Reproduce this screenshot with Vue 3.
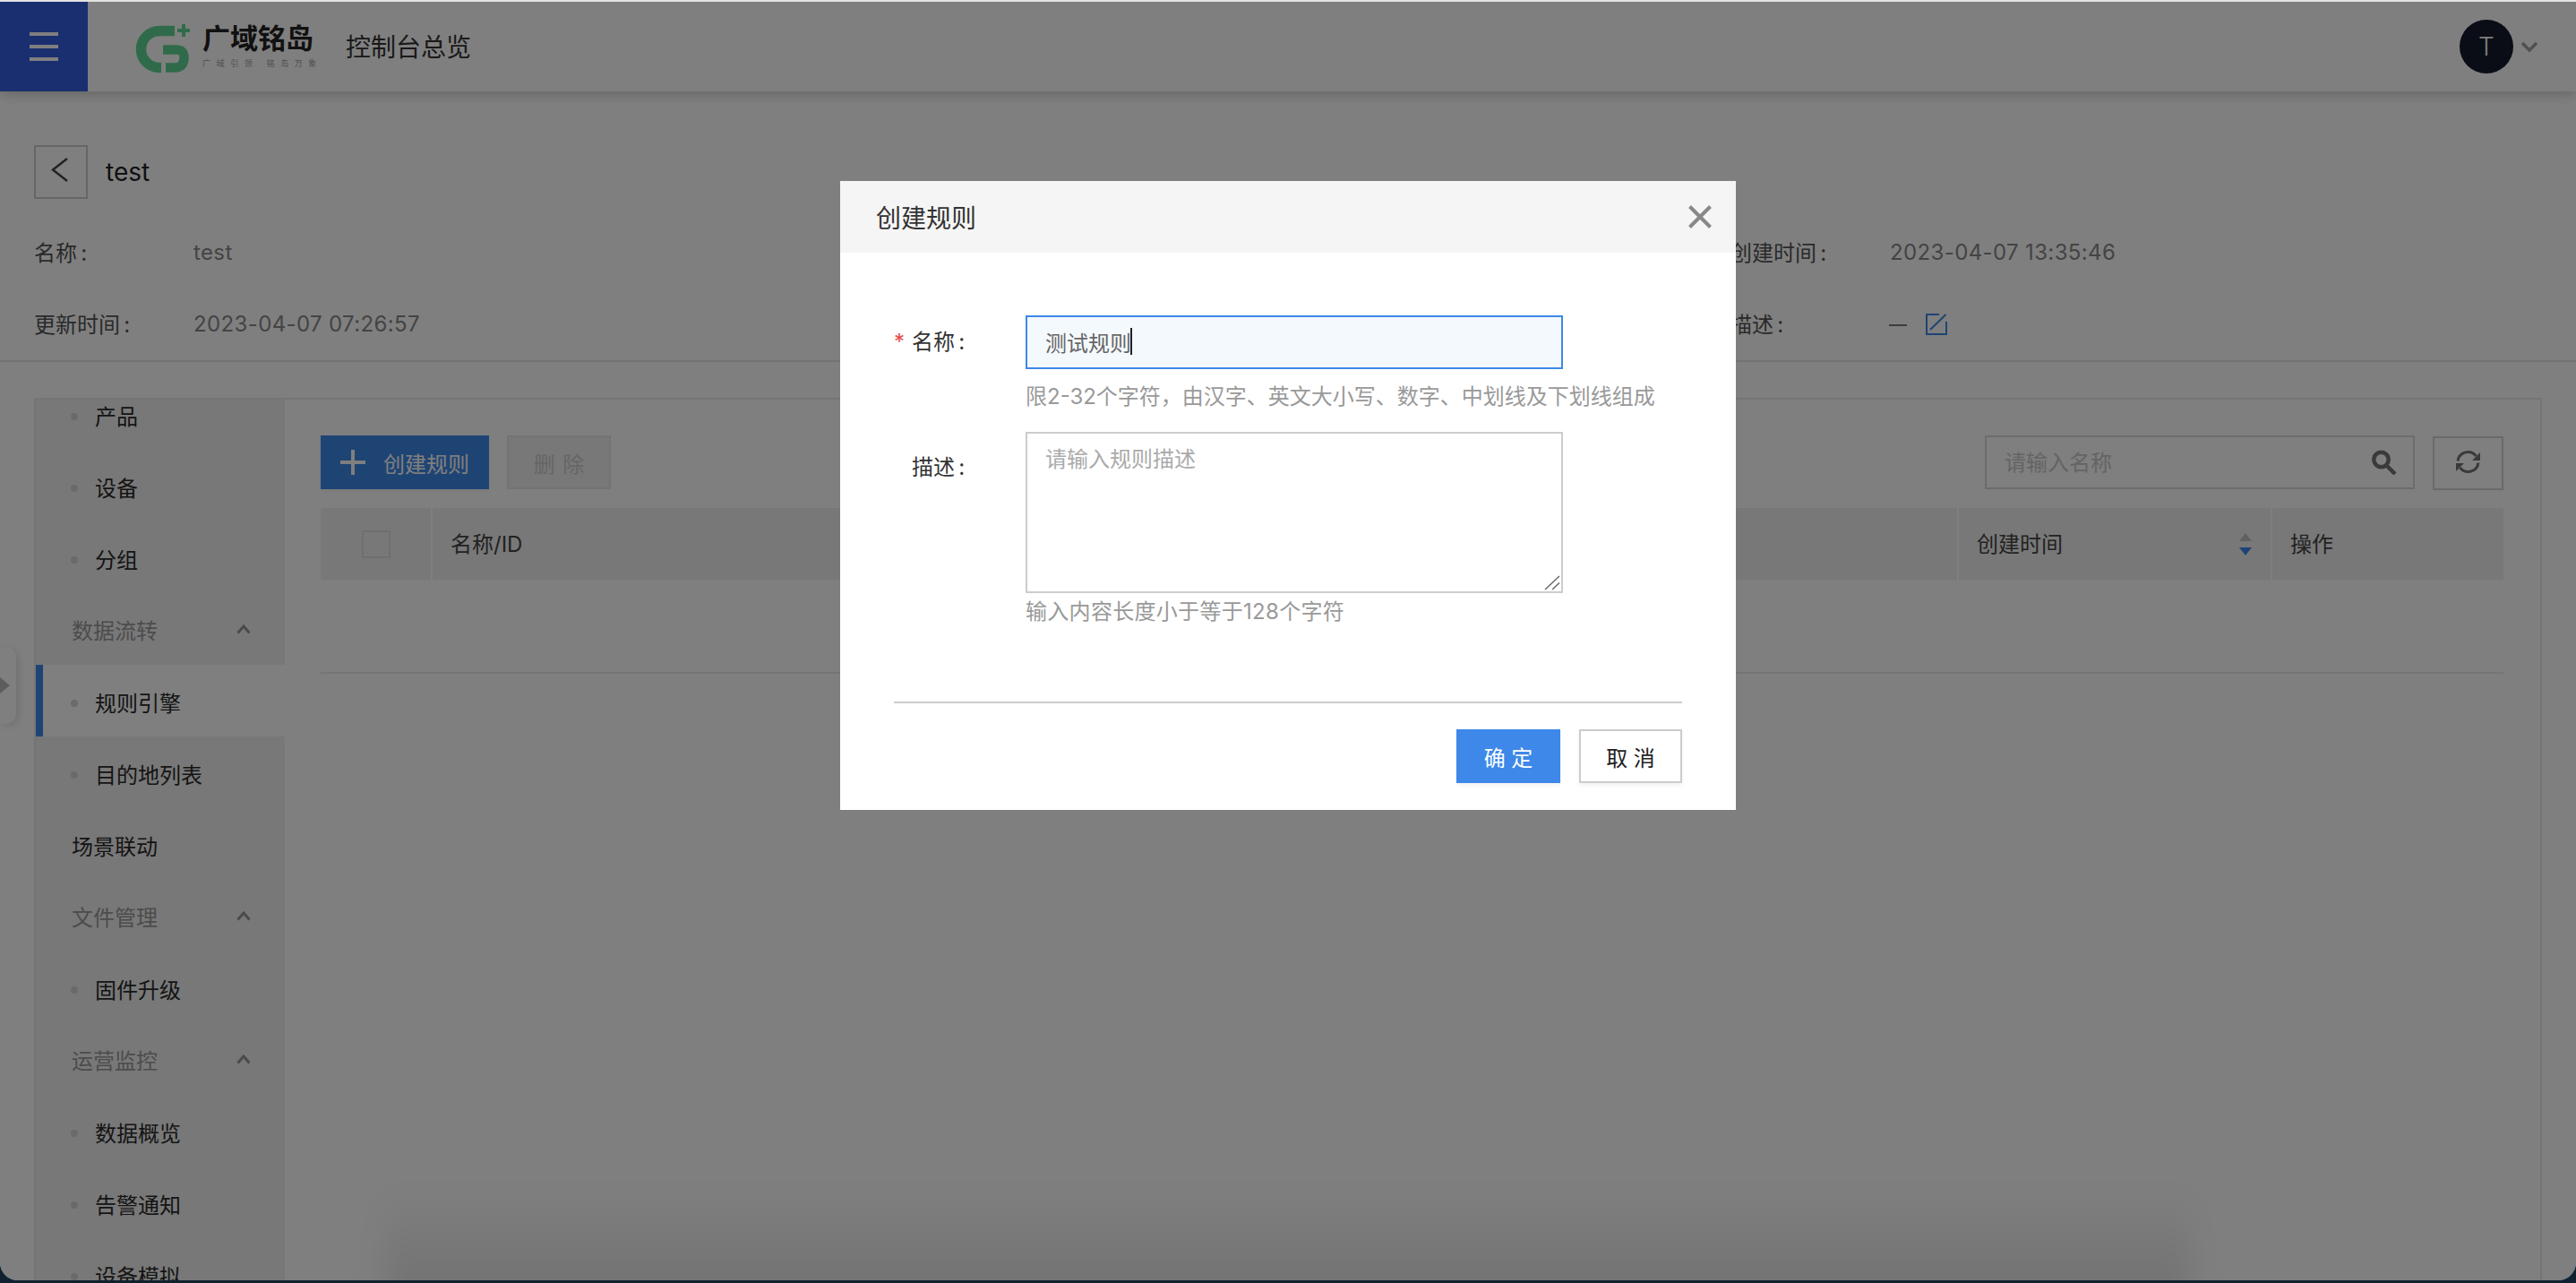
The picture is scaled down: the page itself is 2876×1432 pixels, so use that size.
<script setup>
import { ref } from 'vue'

const ruleName = ref('测试规则')

// Sidebar is scrolled, so the first row starts above the panel edge
const menuItems = [
  { text: '产品', type: 'sub' },
  { text: '设备', type: 'sub' },
  { text: '分组', type: 'sub' },
  { text: '数据流转', type: 'group' },
  { text: '规则引擎', type: 'sub', active: true },
  { text: '目的地列表', type: 'sub' },
  { text: '场景联动', type: 'solo' },
  { text: '文件管理', type: 'group' },
  { text: '固件升级', type: 'sub' },
  { text: '运营监控', type: 'group' },
  { text: '数据概览', type: 'sub' },
  { text: '告警通知', type: 'sub' },
  { text: '设备模拟', type: 'sub' }
]
</script>

<template>
  <div class="desktop">
    <div class="window">
      <div class="top-line"></div>
      <div class="stage">
        <header class="app-header">
          <button class="menu-btn">
            <svg width="32" height="32" viewBox="0 0 32 32" fill="#fff">
              <rect x="0" y="0" width="32" height="4" />
              <rect x="0" y="14" width="32" height="4" />
              <rect x="0" y="28" width="32" height="4" />
            </svg>
          </button>
          <div class="logo">
            <svg class="logo-mark" width="62" height="56" viewBox="150 24 62 56" fill="none" stroke="#5ed694">
              <path d="M195 32.5H178A20.5 20.5 0 0 0 178 73.5H180" stroke-width="11.5" />
              <path d="M182 53.5H197Q205.5 53.5 205.5 62Q205.5 73.5 195 73.5H185" stroke-width="10.5" />
              <path d="M205 25V39M198 32H212" stroke-width="4" />
            </svg>
            <div class="logo-text">
              <div class="logo-name">广域铭岛</div>
              <div class="logo-slogan">广域引领 铭岛万象</div>
            </div>
          </div>
          <div class="header-title">控制台总览</div>
          <div class="user">
            <div class="avatar">T</div>
            <svg width="18" height="12" viewBox="0 0 18 12" fill="none" stroke="#a0a0a0" stroke-width="3.5">
              <path d="M1 2L9 10L17 2" />
            </svg>
          </div>
        </header>

        <section class="detail">
          <div class="detail-title">
            <button class="back-btn">
              <svg width="20" height="28" viewBox="0 0 20 28" fill="none" stroke="#444" stroke-width="2.5">
                <path d="M18 1L2 13.5L18 26" />
              </svg>
            </button>
            <span class="detail-name">test</span>
          </div>
          <div class="meta-grid">
            <div class="meta-item"><span class="meta-label">名称&thinsp;:</span><span class="meta-value">test</span></div>
            <div class="meta-item"></div>
            <div class="meta-item"><span class="meta-label">创建时间&thinsp;:</span><span class="meta-value">2023-04-07 13:35:46</span></div>
            <div class="meta-item"><span class="meta-label">更新时间&thinsp;:</span><span class="meta-value">2023-04-07 07:26:57</span></div>
            <div class="meta-item"></div>
            <div class="meta-item">
              <span class="meta-label">描述&thinsp;:</span>
              <span class="meta-value desc-value">
                <i class="dash"></i>
                <svg width="24" height="24" viewBox="0 0 24 24" fill="none" stroke="#3d88e8" stroke-width="2">
                  <path d="M15 1H1V23H23V9M5 18L22.5 1" />
                </svg>
              </span>
            </div>
          </div>
        </section>

        <main class="panel">
          <aside class="sidebar">
            <div class="sidebar-scroll">
              <div
                v-for="item in menuItems"
                :key="item.text"
                :class="['menu-item', item.type, { active: item.active }]"
              >
                <i v-if="item.type === 'sub'" class="dot"></i>
                <span class="menu-text">{{ item.text }}</span>
                <svg v-if="item.type === 'group'" class="chevron" width="16" height="11" viewBox="0 0 16 11" fill="none" stroke="#959595" stroke-width="3">
                  <path d="M1.5 9.5L8 2L14.5 9.5" />
                </svg>
              </div>
            </div>
          </aside>

          <div class="content">
            <div class="toolbar">
              <button class="btn-create">
                <svg width="28" height="28" viewBox="0 0 28 28" fill="#fff">
                  <rect x="12" y="0" width="4" height="28" />
                  <rect x="0" y="12" width="28" height="4" />
                </svg>
                <span>创建规则</span>
              </button>
              <button class="btn-delete">删 除</button>
              <div class="toolbar-right">
                <div class="search">
                  <span class="search-placeholder">请输入名称</span>
                  <svg width="28" height="28" viewBox="0 0 28 28" fill="none" stroke="#747474" stroke-width="4.5">
                    <circle cx="10.5" cy="11" r="8.2" />
                    <path d="M16 17L26 27" />
                  </svg>
                </div>
                <button class="btn-refresh">
                  <svg width="29" height="27" viewBox="0 0 29 27" fill="none" stroke="#747474" stroke-width="3">
                    <path d="M3 12.5A11.5 11.5 0 0 1 23.5 7" />
                    <path d="M26 14.5A11.5 11.5 0 0 1 5.5 20" />
                    <path d="M28 3V12H19Z" fill="#747474" stroke="none" />
                    <path d="M1 24V15H10Z" fill="#747474" stroke="none" />
                  </svg>
                </button>
              </div>
            </div>

            <div class="table-head">
              <div class="th th-check"><i class="checkbox"></i></div>
              <div class="th"><span class="th-text">名称/ID</span></div>
              <div class="th th-sort">
                <span class="th-text">创建时间</span>
                <span class="sort"><i class="sort-up"></i><i class="sort-down"></i></span>
              </div>
              <div class="th"><span class="th-text">操作</span></div>
            </div>
            <div class="table-body"></div>
          </div>
        </main>

        <div class="collapse-handle"><i class="handle-arrow"></i></div>

        <div class="mask">
          <div class="modal">
            <div class="modal-header">
              <span>创建规则</span>
              <svg width="26" height="26" viewBox="0 0 26 26" fill="none" stroke="#888" stroke-width="4">
                <path d="M1.5 1.5L24.5 24.5M24.5 1.5L1.5 24.5" />
              </svg>
            </div>
            <div class="modal-body">
              <div class="form-row">
                <label class="form-label"><i class="required">*</i>名称&thinsp;:</label>
                <div class="form-field">
                  <div class="input-wrap">
                    <input v-model="ruleName" class="text-input" type="text" />
                    <i class="caret"></i>
                  </div>
                  <p class="form-hint name-hint">限2-32个字符，由汉字、英文大小写、数字、中划线及下划线组成</p>
                </div>
              </div>
              <div class="form-row desc-row">
                <label class="form-label">描述&thinsp;:</label>
                <div class="form-field">
                  <div class="input-wrap">
                    <textarea class="text-area" placeholder="请输入规则描述"></textarea>
                    <svg class="grip" width="18" height="17" viewBox="0 0 18 17" fill="none" stroke="#666" stroke-width="1.4">
                      <path d="M1 16L17 1M9 16L17 8.5" />
                    </svg>
                  </div>
                  <p class="form-hint desc-hint">输入内容长度小于等于128个字符</p>
                </div>
              </div>
            </div>
            <div class="modal-footer">
              <button class="btn-ok">确 定</button>
              <button class="btn-cancel">取 消</button>
            </div>
          </div>
        </div>

        <div class="bottom-shade"></div>
      </div>
    </div>
  </div>
</template>

<style scoped>
.desktop {
  width: 2876px;
  height: 1432px;
  background: #10222f;
  overflow: hidden;
  font-family: Inter, "Noto Sans CJK SC", sans-serif;
  font-size: 24px;
}

button {
  font-family: inherit;
  padding: 0;
  cursor: pointer;
}

.window {
  height: 1429px;
  display: flex;
  flex-direction: column;
  overflow: hidden;
  border-radius: 0 0 20px 20px;
  background: #fff;
}

.top-line {
  height: 2px;
  background: #e2e2e2;
  flex-shrink: 0;
}

.stage {
  position: relative;
  flex: 1;
  display: flex;
  flex-direction: column;
  overflow: hidden;
  min-height: 0;
}

/* Header */
.app-header {
  height: 100px;
  flex-shrink: 0;
  display: flex;
  align-items: center;
  background: #fff;
  box-shadow: 0 2px 14px rgba(30, 60, 40, 0.3);
  position: relative;
}

.menu-btn {
  width: 98px;
  height: 100px;
  border: none;
  background: #345ee0;
  display: flex;
  align-items: center;
  justify-content: center;
}

.logo {
  display: flex;
  align-items: center;
  margin-left: 52px;
  height: 100%;
}

.logo-mark {
  margin-top: 4px;
}

.logo-text {
  margin-left: 14px;
  margin-top: -2px;
}

.logo-name {
  font-size: 31px;
  line-height: 36px;
  font-weight: 700;
  color: #222;
}

.logo-slogan {
  font-size: 9px;
  line-height: 14px;
  margin-top: 3px;
  letter-spacing: 6.6px;
  color: #a0a0a0;
  white-space: nowrap;
}

.header-title {
  margin-left: 26px;
  padding-bottom: 3px;
  font-size: 28px;
  color: #333;
}

.user {
  margin-left: auto;
  margin-right: 43px;
  display: flex;
  align-items: center;
  gap: 9px;
}

.avatar {
  width: 60px;
  height: 60px;
  border-radius: 50%;
  background: #141a2c;
  color: #fff;
  font-size: 28px;
  font-weight: 300;
  display: flex;
  align-items: center;
  justify-content: center;
}

/* Detail info */
.detail {
  flex-shrink: 0;
  padding: 60px 38px 0;
  border-bottom: 2px solid #e6e6e6;
}

.detail-title {
  display: flex;
  align-items: center;
  gap: 20px;
  margin-bottom: 20px;
}

.back-btn {
  width: 60px;
  height: 60px;
  border: 2px solid #ccc;
  background: #fff;
  display: flex;
  align-items: center;
  justify-content: center;
  padding: 0 2px 4px 0;
}

.detail-name {
  font-size: 28px;
  color: #222;
}

.meta-grid {
  display: grid;
  grid-template-columns: repeat(3, 947px);
  grid-auto-rows: 80px;
}

.meta-item {
  display: flex;
  align-items: center;
}

.meta-label {
  width: 178px;
  margin-bottom: 4px;
  color: #555;
}

.meta-value {
  margin-bottom: 2px;
  letter-spacing: 0.37px;
  color: #888;
}

.desc-value {
  display: flex;
  align-items: center;
  gap: 21px;
  margin-bottom: 0;
}

.dash {
  width: 20px;
  height: 2px;
  margin-top: 2px;
  margin-left: -1px;
  background: #787878;
}

/* Panel */
.panel {
  flex: 1;
  min-height: 0;
  margin: 40px 38px 0;
  border: 2px solid #ebebeb;
  border-bottom: none;
  display: flex;
}

.sidebar {
  width: 278px;
  flex-shrink: 0;
  background: #f0f0f0;
  overflow: hidden;
}

.sidebar-scroll {
  margin-top: -21px;
}

.menu-item {
  height: 80px;
  display: flex;
  align-items: center;
  color: #2a2a2a;
  position: relative;
  isolation: isolate;
}

.menu-text {
  margin-bottom: 4px;
}

.menu-item.sub {
  padding-left: 39px;
}

.menu-item.solo {
  padding-left: 40px;
}

.menu-item.group {
  padding-left: 40px;
  color: #999;
}

.menu-item.group .menu-text {
  margin-bottom: 5px;
}

/* highlight sits a little above the row text */
.menu-item.active::before {
  content: "";
  position: absolute;
  z-index: -1;
  left: 0;
  right: 0;
  top: -3px;
  height: 80px;
  box-sizing: border-box;
  background: #fff;
  border-left: 8px solid #3d88e8;
}

.dot {
  width: 8px;
  height: 8px;
  border-radius: 50%;
  background: #d4d4d4;
  margin-right: 19px;
}

.chevron {
  position: absolute;
  left: 224px;
  top: 32px;
}

/* Content */
.content {
  flex: 1;
  min-width: 0;
  padding: 40px 41px 0 40px;
}

.toolbar {
  display: flex;
  height: 60px;
}

.btn-create {
  width: 188px;
  height: 60px;
  border: none;
  background: #3d88e8;
  color: #fff;
  font-size: 24px;
  display: flex;
  align-items: center;
  padding-left: 22px;
  gap: 20px;
  box-shadow: 0 2px 4px rgba(0, 0, 0, 0.05);
}

.btn-delete {
  width: 116px;
  height: 60px;
  margin-left: 20px;
  border: 2px solid #e6e6e6;
  background: #f0f0f0;
  color: #ccc;
  font-size: 24px;
  word-spacing: 2px;
}

.toolbar-right {
  margin-left: auto;
  display: flex;
  gap: 20px;
}

.search {
  width: 480px;
  height: 60px;
  box-sizing: border-box;
  border: 2px solid #d8d8d8;
  display: flex;
  align-items: center;
  justify-content: space-between;
  padding: 0 18px 0 20px;
}

.search-placeholder {
  margin-bottom: 3px;
  color: #c8c8c8;
}

.btn-refresh {
  width: 79px;
  height: 60px;
  margin-top: 1px;
  border: 2px solid #d4d4d4;
  background: #fff;
  display: flex;
  align-items: center;
  justify-content: center;
  padding-bottom: 4px;
}

.table-head {
  margin-top: 21px;
  display: grid;
  grid-template-columns: 123px 1702px 348px 258px;
  column-gap: 2px;
  height: 80px;
  color: #444;
}

.th {
  background: #f0f0f0;
  display: flex;
  align-items: center;
  padding-left: 20px;
}

.th-text {
  margin-bottom: 3px;
}

.th-check {
  padding-left: 46px;
}

.checkbox {
  width: 32px;
  height: 31px;
  box-sizing: border-box;
  border: 2px solid #dedede;
}

.th-sort {
  justify-content: space-between;
  padding-right: 21px;
}

.sort {
  display: flex;
  flex-direction: column;
  gap: 7px;
}

.sort-up,
.sort-down {
  width: 0;
  height: 0;
  border-left: 7px solid transparent;
  border-right: 7px solid transparent;
}

.sort-up {
  border-bottom: 9px solid #c0c0c0;
}

.sort-down {
  border-top: 9px solid #3d88e8;
}

.table-body {
  height: 103px;
  border-bottom: 2px solid #ebebeb;
}

/* Collapse handle over the left edge */
.collapse-handle {
  position: absolute;
  left: 0;
  top: 720px;
  width: 18px;
  height: 86px;
  background: #fff;
  border-radius: 0 12px 12px 0;
  box-shadow: 3px 2px 8px rgba(0, 0, 0, 0.12);
  display: flex;
  align-items: center;
}

.handle-arrow {
  width: 0;
  height: 0;
  border-top: 9px solid transparent;
  border-bottom: 9px solid transparent;
  border-left: 11px solid #bbb;
}

/* Dialog */
.mask {
  position: absolute;
  inset: 0;
  background: rgba(0, 0, 0, 0.5);
  display: flex;
  justify-content: center;
  align-items: flex-start;
  padding-top: 200px;
}

.modal {
  width: 1000px;
  height: 702px;
  background: #fff;
  display: flex;
  flex-direction: column;
}

.modal-header {
  height: 80px;
  flex-shrink: 0;
  background: #f5f5f5;
  display: flex;
  align-items: center;
  justify-content: space-between;
  padding: 0 27px 0 40px;
  font-size: 28px;
  color: #333;
}

.modal-body {
  flex: 1;
  padding: 70px 60px 0 80px;
}

.form-row {
  display: flex;
}

.desc-row {
  margin-top: 22px;
}

.form-label {
  width: 127px;
  flex-shrink: 0;
  color: #333;
  line-height: 60px;
  position: relative;
}

.desc-row .form-label {
  line-height: 80px;
}

.required {
  position: absolute;
  left: -20px;
  color: #e5483f;
  font-style: normal;
}

.form-field {
  flex: 1;
  min-width: 0;
}

.input-wrap {
  position: relative;
  width: 600px;
}

.text-input {
  width: 100%;
  height: 60px;
  box-sizing: border-box;
  border: 2px solid #3d88e8;
  outline: none;
  background: #f4f9fd;
  padding: 0 20px 2px;
  font-family: inherit;
  font-size: 24px;
  color: #666;
  display: block;
}

.caret {
  position: absolute;
  left: 117px;
  top: 14px;
  width: 2px;
  height: 30px;
  background: #222;
}

.form-hint {
  margin: 0;
  color: #999;
  white-space: nowrap;
  line-height: 34px;
}

.name-hint {
  margin-top: 14px;
}

.desc-hint {
  margin-top: 4px;
  letter-spacing: 0.3px;
}

.text-area {
  width: 600px;
  height: 180px;
  box-sizing: border-box;
  border: 2px solid #ccc;
  outline: none;
  padding: 12px 20px;
  font-family: inherit;
  font-size: 24px;
  line-height: 34px;
  color: #555;
  display: block;
  border-radius: 0;
  resize: none;
}

.text-area::placeholder {
  color: #aaa;
}

.grip {
  position: absolute;
  right: 3px;
  bottom: 3px;
}

.modal-footer {
  margin: 0 60px;
  border-top: 2px solid #ccc;
  height: 121px;
  flex-shrink: 0;
  box-sizing: border-box;
  display: flex;
  justify-content: flex-end;
  gap: 21px;
  padding-top: 29px;
}

.btn-ok,
.btn-cancel {
  height: 60px;
  font-size: 24px;
  box-shadow: 0 3px 4px rgba(0, 0, 0, 0.05);
}

.btn-ok {
  width: 116px;
  border: none;
  background: #3d88e8;
  color: #fff;
}

.btn-cancel {
  width: 115px;
  border: 2px solid #ccc;
  background: #fff;
  color: #222;
}

/* Shadow of the desktop dock falling over the window */
.bottom-shade {
  position: absolute;
  left: 430px;
  right: 430px;
  bottom: -20px;
  height: 120px;
  background: linear-gradient(rgba(0, 0, 0, 0), rgba(0, 0, 0, 0.11));
  filter: blur(16px);
  pointer-events: none;
}
</style>

<style>
html,
body {
  margin: 0;
  overflow: hidden;
}
</style>
